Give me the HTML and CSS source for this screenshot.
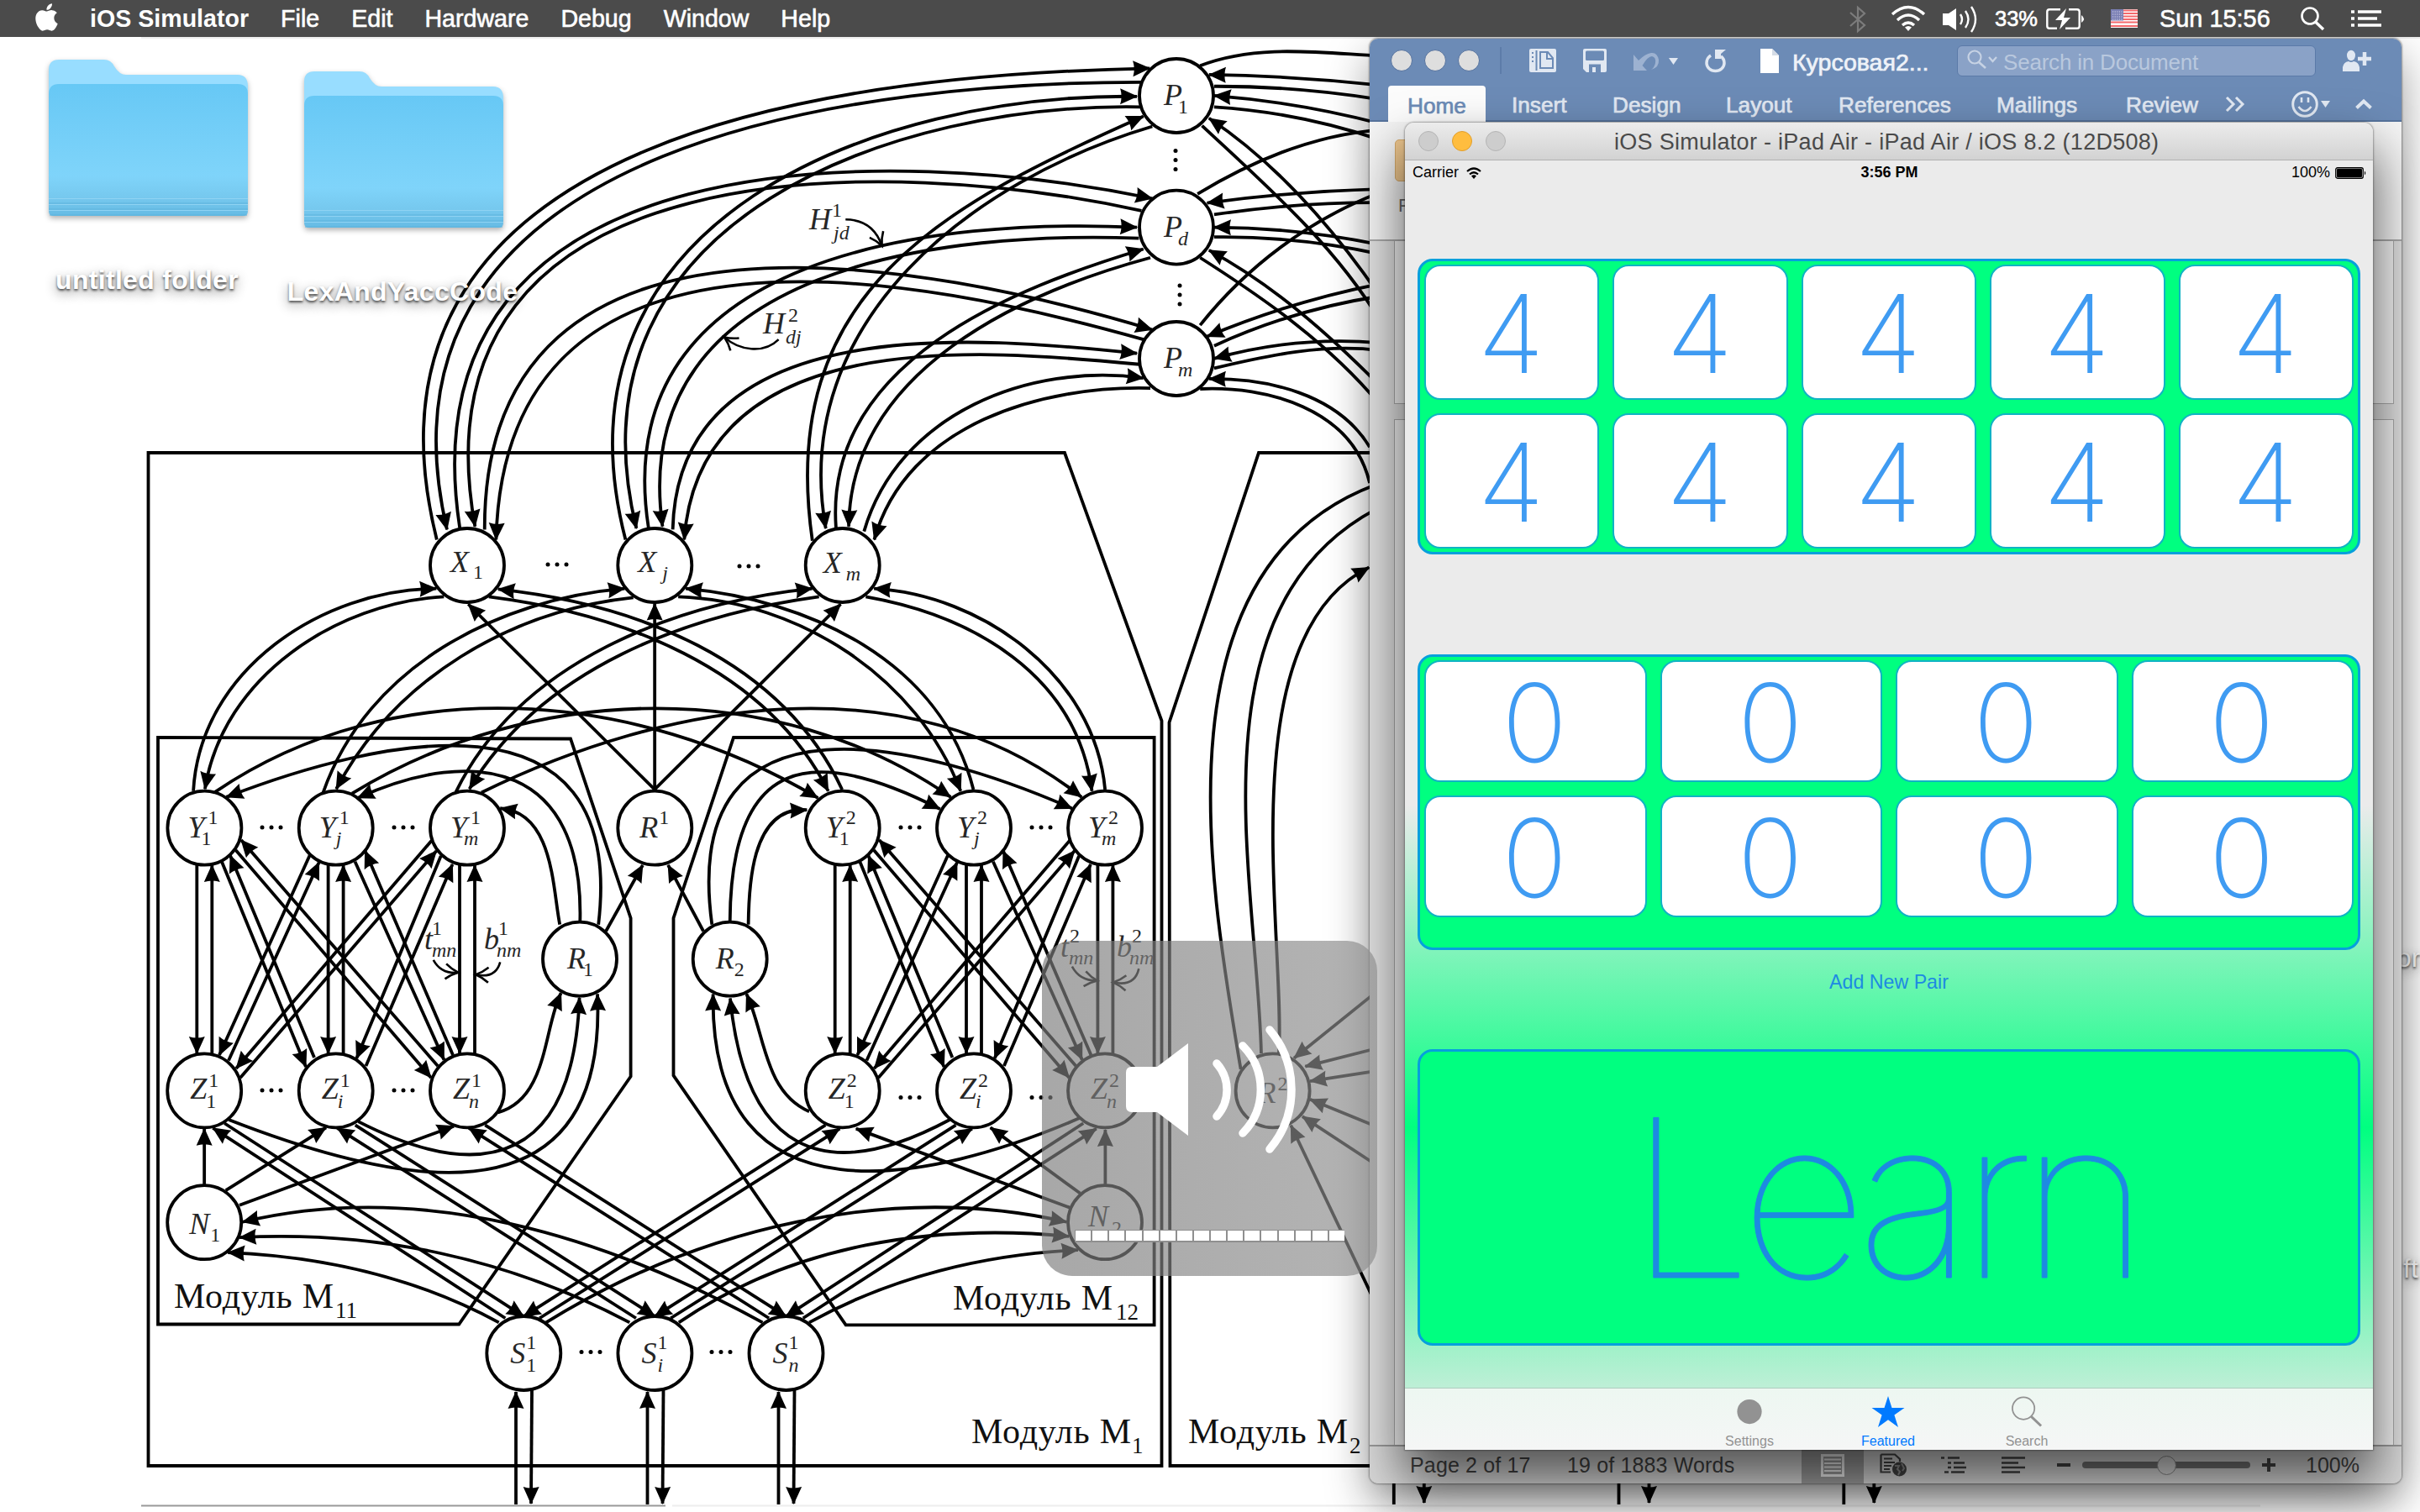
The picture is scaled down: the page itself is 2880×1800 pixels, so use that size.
FILE: index.html
```html
<!DOCTYPE html>
<html lang="en">
<head>
<meta charset="utf-8">
<title>Desktop</title>
<link rel="stylesheet" href="styles.css">
</head>
<body>
<div class="desktop">
  <svg class="wallpaper" id="diagram" viewBox="0 0 2880 1800" aria-label="Network diagram"></svg>

  <div class="folder folder-a">
    <svg class="folder-art" viewBox="0 0 237 186">
      <defs>
        <linearGradient id="fb" x1="0" y1="0" x2="0" y2="1"><stop offset="0" stop-color="#67c8f5"/><stop offset=".7" stop-color="#7fd4fa"/><stop offset=".86" stop-color="#76c8ee"/><stop offset="1" stop-color="#66bbe4"/></linearGradient>
      </defs>
      <path d="M0 12Q0 0 12 0H66Q74 0 78 8Q84 18 92 18H225Q237 18 237 32V60H0Z" fill="#98ddff"/>
      <path d="M0 41Q0 29 12 29H225Q237 29 237 41V180Q237 186 231 186H6Q0 186 0 180Z" fill="url(#fb)"/>
      <path d="M0 165.500H237M0 172.500H237M0 179.500H237" stroke="#8fd3f3" stroke-width="1.200"/>
      <path d="M0 171H237M0 178H237M1 185H236" stroke="#5fb3dd" stroke-width="1.200"/>
    </svg>
    <span class="folder-name">untitled folder</span>
  </div>
  <div class="folder folder-b">
    <svg class="folder-art" viewBox="0 0 237 186">
      <path d="M0 12Q0 0 12 0H66Q74 0 78 8Q84 18 92 18H225Q237 18 237 32V60H0Z" fill="#98ddff"/>
      <path d="M0 41Q0 29 12 29H225Q237 29 237 41V180Q237 186 231 186H6Q0 186 0 180Z" fill="url(#fb)"/>
      <path d="M0 165.500H237M0 172.500H237M0 179.500H237" stroke="#8fd3f3" stroke-width="1.200"/>
      <path d="M0 171H237M0 178H237M1 185H236" stroke="#5fb3dd" stroke-width="1.200"/>
    </svg>
    <span class="folder-name">LexAndYaccCode</span>
  </div>
  <span class="icon-name name-a">or</span>
  <span class="icon-name name-b">ft</span>

  <section class="word">
    <header class="word-head">
      <div class="word-bar">
        <i class="dot"></i><i class="dot"></i><i class="dot"></i>
        <i class="sep"></i>
        <svg class="i-side" viewBox="0 0 32 28"><rect width="32" height="28" rx="2" fill="#e1e8f2"/><path d="M8.500 2V26" stroke="#6c8bb6" stroke-width="2"/><path d="M4 4V6M4 9V11M4 14V16" stroke="#6c8bb6" stroke-width="2"/><path d="M13 4H22L28 11V23H13Z" fill="none" stroke="#6c8bb6" stroke-width="2"/><path d="M21 4V12H28" fill="none" stroke="#6c8bb6" stroke-width="2"/></svg>
        <svg class="i-save" viewBox="0 0 28 28"><path d="M2 0H26Q28 0 28 2V26Q28 28 26 28H4L0 24V2Q0 0 2 0Z" fill="#e1e8f2"/><rect x="3" y="2.500" width="22" height="11.500" rx="1.500" fill="#6c8bb6"/><path d="M7 28V18.500H21V28H15V22H11V28Z" fill="#6c8bb6"/></svg>
        <svg class="i-undo" viewBox="0 0 50 24"><path d="M0 5V24H16L10.500 18Q17 7 22 7Q27 8 26 15Q25 20 21 23Q31 20 30 11Q28 2 21 3Q14 4 6 12Z" fill="#9db2d1"/><path d="M42 9H53L47.500 17Z" fill="#e1e8f2"/></svg>
        <svg class="i-redo" viewBox="0 0 25 28"><path d="M7 8Q2 11 2 17A10.500 9.500 0 0 0 23 17Q23 12 19 9" fill="none" stroke="#e1e8f2" stroke-width="3.500"/><path d="M12 1H25L19 6V12H12Z" fill="#e1e8f2"/></svg>
        <svg class="i-doc" viewBox="0 0 22 29"><path d="M0 0H14L22 8V29H0Z" fill="#fff"/><path d="M14 0V8H22Z" fill="#d5dce6"/></svg>
        <span class="doc-name">Курсовая2...</span>
        <div class="search">
          <svg viewBox="0 0 38 26"><circle cx="9" cy="9" r="7.500" fill="none" stroke="#c6d2e4" stroke-width="2.200"/><path d="M14 15L22 22" stroke="#c6d2e4" stroke-width="2.600"/><path d="M26 9L30.500 14L35 9" fill="none" stroke="#c6d2e4" stroke-width="2.200"/></svg>
          <span>Search in Document</span>
        </div>
        <svg class="i-user" viewBox="0 0 34 25"><ellipse cx="10" cy="6" rx="5" ry="6.200" fill="#e1e8f2"/><path d="M0 25V20Q1 14 7 13Q10 15 13 13Q19 14 20 20V25Z" fill="#e1e8f2"/><path d="M26 2V18M18 10H34" stroke="#e1e8f2" stroke-width="4.500"/></svg>
      </div>
      <nav class="word-tabs">
        <b class="tab-home">Home</b><span class="t1">Insert</span><span class="t2">Design</span><span class="t3">Layout</span><span class="t4">References</span><span class="t5">Mailings</span><span class="t6">Review</span>
        <svg class="t7" viewBox="0 0 24 18"><path d="M2 1L10 9L2 17M13 1L21 9L13 17" fill="none" stroke="#e1e8f2" stroke-width="3"/></svg>
        <svg class="t8" viewBox="0 0 46 32"><circle cx="16" cy="16" r="14.300" fill="none" stroke="#e1e8f2" stroke-width="3"/><path d="M12 8V14M20 8V14M8.500 19Q16 29 23.500 19" fill="none" stroke="#e1e8f2" stroke-width="2.600"/><path d="M35 12H46L40.500 20Z" fill="#e1e8f2"/></svg>
        <svg class="t9" viewBox="0 0 20 12"><path d="M1.500 10.500L10 2.500L18.500 10.500" fill="none" stroke="#e1e8f2" stroke-width="4"/></svg>
      </nav>
    </header>
    <div class="ribbon"><i class="paste"></i><span>P</span></div>
    <div class="pages"><div class="page page-1"></div><div class="page page-2"></div></div>
    <footer class="word-foot">
      <span class="pg">Page 2 of 17</span><span class="wc">19 of 1883 Words</span>
      <span class="view-on"><svg viewBox="0 0 28 27"><rect x="1.500" y="1.500" width="25" height="24" fill="none" stroke="#f4f4f4" stroke-width="3"/><path d="M4 6.500H24M4 11H24M4 15.500H24M4 20H24" stroke="#f4f4f4" stroke-width="2"/></svg></span>
      <svg class="v2" viewBox="0 0 32 28"><path d="M1.500 1.500H18L24 7V10M1.500 1.500V22.500H13M5 6.500H15M5 11H18M5 15H14M5 19H12" fill="none" stroke="#444" stroke-width="2.200"/><circle cx="23.500" cy="19" r="8.500" fill="#444"/><path d="M18 15L23 15L21 19L24 22L22 26M26 12L29 18L27 21" fill="none" stroke="#8d8d8d" stroke-width="2"/></svg>
      <svg class="v3" viewBox="0 0 30 20"><path d="M0 1.500H4M8 1.500H22M8 7.500H12M15 7.500H28M8 13H12M15 13H30M4 18.500H9M12 18.500H28" stroke="#444" stroke-width="2.400"/></svg>
      <svg class="v4" viewBox="0 0 28 20"><path d="M0 1.500H28M0 7.500H20M0 13H28M0 18.500H22" stroke="#444" stroke-width="2.400"/></svg>
      <i class="minus"></i><div class="slider"><i></i></div><i class="plus"></i><span class="zoom">100%</span>
    </footer>
  </section>

  <section class="sim">
    <header class="sim-title"><i></i><i class="amber"></i><i></i><h1>iOS Simulator - iPad Air - iPad Air / iOS 8.2 (12D508)</h1></header>
    <div class="screen">
      <div class="status">
        <span class="carrier">Carrier <svg viewBox="0 0 18 14"><path d="M1 5Q9 -2 17 5M4 8.500Q9 4 14 8.500" fill="none" stroke="#000" stroke-width="2.200"/><path d="M6 10.500Q9 8 12 10.500L9 14Z"/></svg></span>
        <b>3:56 PM</b>
        <span class="power">100% <svg viewBox="0 0 37 14"><rect x=".75" y=".75" width="32.500" height="12.500" rx="2" fill="none" stroke="#000" stroke-width="1.300"/><rect x="2" y="2" width="30" height="10" rx="1"/><path d="M35 4.500Q37.500 7 35 9.500Z"/></svg></span>
      </div>
      <div class="panel fives"><div>4</div><div>4</div><div>4</div><div>4</div><div>4</div><div>4</div><div>4</div><div>4</div><div>4</div><div>4</div></div>
      <div class="panel fours"><div>0</div><div>0</div><div>0</div><div>0</div><div>0</div><div>0</div><div>0</div><div>0</div></div>
      <div class="add">Add New Pair</div>
      <div class="learn">Learn</div>
      <nav class="tabs">
        <span><svg viewBox="0 0 40 40"><circle cx="20" cy="20" r="15" fill="#929292"/></svg>Settings</span>
        <span class="on"><svg viewBox="0 0 40 40"><path d="M20 1L24.600 15.300H40L27.600 24.200L32.300 39L20 30L7.700 39L12.400 24.200L0 15.300H15.400Z" fill="#007aff"/></svg>Featured</span>
        <span><svg viewBox="0 0 40 40"><circle cx="16" cy="16" r="13.500" fill="none" stroke="#929292" stroke-width="1.800"/><path d="M25.500 26L37.500 37.500" stroke="#929292" stroke-width="3"/></svg>Search</span>
      </nav>
    </div>
  </section>

  <div class="hud">
    <svg viewBox="0 0 400 330"><path d="M107 150H137L174 122V232L137 204H107Q100 204 100 197V157Q100 150 107 150Z" fill="#fff"/><path d="M208 146A47 47 0 0 1 208 209M239 125A74 74 0 0 1 239 229M271 106A110 110 0 0 1 271 248" fill="none" stroke="#fff" stroke-width="9.500" stroke-linecap="round"/></svg>
    <div class="level"><i></i><i></i><i></i><i></i><i></i><i></i><i></i><i></i><i></i><i></i><i></i><i></i><i></i><i></i><i></i><i></i></div>
  </div>

  <header class="menubar">
    <svg class="apple" viewBox="2 0 20 24"><path fill="#fff" d="M12.152 6.896c-.948 0-2.415-1.078-3.960-1.040-2.040.027-3.910 1.183-4.961 3.014-2.117 3.675-.546 9.103 1.519 12.090 1.013 1.454 2.208 3.090 3.792 3.039 1.520-.065 2.090-.987 3.935-.987 1.831 0 2.350.987 3.960.948 1.637-.026 2.676-1.480 3.676-2.948 1.156-1.688 1.636-3.325 1.662-3.415-.039-.013-3.182-1.221-3.220-4.857-.026-3.040 2.480-4.494 2.597-4.559-1.429-2.090-3.623-2.324-4.390-2.376-2-.156-3.675 1.090-4.610 1.090zM15.530 3.830c.843-1.012 1.400-2.427 1.245-3.830-1.207.052-2.662.805-3.532 1.818-.780.896-1.454 2.338-1.273 3.714 1.338.104 2.715-.688 3.559-1.701"/></svg>
    <nav><b>iOS Simulator</b><span>File</span><span>Edit</span><span>Hardware</span><span>Debug</span><span>Window</span><span>Help</span></nav>
    <div class="extras">
      <svg class="m-bt" viewBox="0 0 20 32"><path d="M1 8L18 23L10 30V2L18 9L1 24" fill="none" stroke="#7c7c7c" stroke-width="2.200"/></svg>
      <svg class="m-wifi" viewBox="0 0 42 30"><path d="M2 10Q21 -7 40 10M8 17Q21 5 34 17M14 23Q21 17 28 23" fill="none" stroke="#fff" stroke-width="3.400"/><path d="M17 25.500Q21 22.500 25 25.500L21 30Z" fill="#fff"/></svg>
      <svg class="m-vol" viewBox="0 0 42 32"><path d="M0 10H7L16 4V30L7 24H0Z" fill="#fff"/><path d="M21 11Q25 17 21 23M27 7Q34 17 27 27M34 2Q44 17 34 32" fill="none" stroke="#fff" stroke-width="2.400"/></svg>
      <span class="m-pct">33%</span>
      <svg class="m-bat" viewBox="0 0 46 25"><path d="M17 1.300H4Q1.300 1.300 1.300 4V21Q1.300 23.700 4 23.700H13M27 1.300H37Q39.700 1.300 39.700 4V21Q39.700 23.700 37 23.700H23" fill="none" stroke="#fff" stroke-width="2.400"/><path d="M24 0L11 14H19L16 25L29 11H21ZM42 8Q48 12.500 42 17Z" fill="#fff"/></svg>
      <svg class="m-flag" viewBox="0 0 32 22"><rect width="32" height="22" fill="#fff"/><path d="M0 1.500H32M0 5H32M0 8.500H32M0 12H32M0 15.500H32M0 20H32" stroke="#f4696c" stroke-width="1.900"/><rect width="15" height="13.500" fill="#7a7fb4"/><path d="M2 3H14M2 6H14M2 9H14M2 12H14" stroke="#dcdcee" stroke-width="1" stroke-dasharray="1.200 1.400"/></svg>
      <span class="m-time">Sun 15:56</span>
      <svg class="m-find" viewBox="0 0 28 28"><circle cx="11" cy="11" r="9.500" fill="none" stroke="#fff" stroke-width="2.600"/><path d="M17.500 18L27 27" stroke="#fff" stroke-width="3.400"/></svg>
      <svg class="m-list" viewBox="0 0 36 20"><path d="M0 2H4M8 2H36M0 10H4M8 10H31M0 18H4M8 18H36" stroke="#fff" stroke-width="3.600"/></svg>
    </div>
  </header>
</div>
<script src="diagram.js"></script>
</body>
</html>
```
FILE: styles.css
```css
* { box-sizing: border-box; margin: 0; padding: 0; }
body { width: 2880px; height: 1800px; overflow: hidden; font-family: "Liberation Sans", Arial, sans-serif; }
svg { display: block; overflow: visible; flex: none; }
.desktop { position: relative; width: 2880px; height: 1800px; overflow: hidden; background: #fff; }
.wallpaper { position: absolute; inset: 0; width: 2880px; height: 1800px; }
.wallpaper .edge { fill: none; stroke: #000; stroke-width: 3.8; }
.wallpaper .thin { fill: none; stroke: #000; stroke-width: 2.6; }
.wallpaper .box { fill: none; stroke: #000; stroke-width: 3.8; }
.wallpaper .node { fill: #fff; stroke: #000; stroke-width: 3.8; }
.wallpaper text { font-family: "Liberation Serif", "Times New Roman", serif; fill: #262626; }
.wallpaper .sym { font-size: 36px; font-style: italic; }
.wallpaper .idx { font-size: 24px; font-style: italic; }
.wallpaper .num { font-style: normal; }
.wallpaper .module { font-size: 42px; fill: #111; }

/* menu bar */
.menubar { position: absolute; left: 0; top: 0; width: 2880px; height: 44px; background: #4b4b4b; color: #fff; display: flex; align-items: center; padding: 0 46px 0 42px; font-size: 28.6px; }
.apple { width: 27px; height: 33px; margin-top: -4px; }
.menubar nav { display: flex; gap: 38px; margin-left: 38px; }
.menubar span { -webkit-text-stroke: .6px #fff; }
.extras { display: flex; align-items: center; margin-left: auto; }
.m-bt { width: 20px; height: 32px; margin-top: 2px; }
.m-wifi { width: 42px; height: 30px; margin-left: 29px; }
.m-vol { width: 42px; height: 32px; margin-left: 20px; }
.m-pct { font-size: 25.5px; margin-left: 20px; width: 52px; }
.m-bat { width: 46px; height: 25px; margin-left: 9px; }
.m-flag { width: 32px; height: 22px; margin-left: 31px; }
.m-time { margin-left: 26px; width: 132px; font-size: 28.9px; white-space: nowrap; }
.m-find { width: 28px; height: 28px; margin-left: 36px; }
.m-list { width: 36px; height: 20px; margin-left: 32px; }

/* desktop icons */
.folder { position: absolute; display: flex; flex-direction: column; align-items: center; width: 300px; gap: 57px; }
.folder-a { left: 26px; top: 71px; }
.folder-b { left: 330px; top: 85px; }
.folder-art { width: 237px; height: 186px; filter: drop-shadow(0 3px 3px rgba(0,0,0,.3)); }
.folder-name, .icon-name { color: #fff; font-weight: 700; font-size: 32px; line-height: 38px; white-space: nowrap; text-shadow: 0 2px 3px rgba(0,0,0,.65), 0 5px 14px rgba(0,0,0,.45); }
.folder-name { letter-spacing: .3px; margin-left: -2px; }
.icon-name { position: absolute; font-weight: 400; }
.name-a { left: 2852px; top: 1121px; }
.name-b { left: 2860px; top: 1491px; }

/* word processor window */
.word { position: absolute; left: 1630px; top: 46px; width: 1228px; height: 1720px; border-radius: 10px; overflow: hidden; display: flex; flex-direction: column; background: #e2e2e2; box-shadow: 0 0 2px 1px rgba(0,0,0,.35), 0 22px 52px rgba(0,0,0,.4); }
.word-head { height: 99px; flex: none; background: #6c8bb6; border-bottom: 2px solid #56739c; }
.word-bar { display: flex; align-items: center; height: 52px; padding-left: 25px; }
.dot { width: 26px; height: 26px; border-radius: 50%; background: #dedede; border: 1.500px solid #55729e; margin-right: 14px; flex: none; }
.sep { width: 2px; height: 32px; background: #5d7ca9; margin-left: 10px; }
.i-side { width: 32px; height: 28px; margin-left: 33px; }
.i-save { width: 28px; height: 28px; margin-left: 32px; }
.i-undo { width: 50px; height: 24px; margin-left: 32px; }
.i-redo { width: 25px; height: 28px; margin-left: 35px; }
.i-doc { width: 22px; height: 29px; margin-left: 41px; }
.doc-name { margin-left: 16px; width: 180px; font-size: 28.5px; color: #eef2f8; padding-top: 4px; white-space: nowrap; -webkit-text-stroke: .7px #eef2f8; }
.search { width: 427px; height: 37px; border-radius: 6px; border: 1.500px solid #5b7aa8; background: #8aa2c7; display: flex; align-items: center; padding-left: 11px; margin-left: 16px; font-size: 26px; color: #b9c8de; gap: 5px; }
.search svg { width: 38px; height: 26px; }
.search span { padding-top: 4px; letter-spacing: -.2px; }
.i-user { width: 34px; height: 25px; margin-left: 32px; }
.word-tabs { display: flex; align-items: center; height: 47px; font-size: 26.2px; color: #e1e8f2; padding: 4px 0 0 22px; -webkit-text-stroke: .7px #e1e8f2; }
.word-tabs span { padding-top: 3px; }
.tab-home { width: 116px; height: 43px; background: #fcfcfc; color: #6c8bb6; border-radius: 4px 4px 0 0; font-weight: 400; text-align: center; line-height: 48px; -webkit-text-stroke: .7px #6c8bb6; }
.t1 { margin-left: 31px; width: 120px; }
.t2 { width: 135px; }
.t3 { width: 134px; }
.t4 { width: 188px; }
.t5 { width: 154px; }
.t6 { width: 118px; }
.t7 { width: 24px; height: 18px; }
.t8 { width: 46px; height: 32px; margin-left: 55px; }
.t9 { width: 20px; height: 12px; margin-left: 30px; }
.ribbon { height: 142px; flex: none; background: #f4f4f4; border-bottom: 2px solid #a9a9a9; padding: 21px 0 0 30px; display: flex; flex-direction: column; color: #666; font-size: 22px; }
.paste { width: 40px; height: 50px; border-radius: 5px; background: #f2ca90; border: 1.500px solid #d8ac6c; }
.ribbon span { margin: 16px 0 0 4px; }
.pages { flex: 1; display: flex; flex-direction: column; gap: 18px; padding: 0 9px 0 29px; background: #dfdfdf; }
.page { background: #f3f3f3; border: 1.500px solid #aaa; border-top: 0; }
.page-1 { height: 194px; }
.page-2 { flex: 1; border-top: 1.500px solid #aaa; border-bottom: 0; }
.word-foot { height: 46px; flex: none; background: #d8d8d8; border-top: 2px solid #999; display: flex; align-items: center; padding-left: 48px; font-size: 25px; color: #444; white-space: nowrap; }
.pg { width: 187px; letter-spacing: .15px; }
.wc { width: 279px; letter-spacing: .15px; }
.view-on { width: 74px; height: 46px; background: #9e9e9e; display: flex; align-items: center; justify-content: center; }
.view-on svg { width: 28px; height: 27px; }
.v2 { width: 32px; height: 28px; margin-left: 19px; }
.v3 { width: 30px; height: 20px; margin-left: 41px; }
.v4 { width: 28px; height: 20px; margin-left: 42px; }
.minus { width: 16px; height: 4px; background: #444; margin-left: 38px; }
.slider { width: 200px; height: 8px; border-radius: 4px; background: #747474; margin-left: 14px; display: flex; align-items: center; justify-content: center; }
.slider i { width: 23px; height: 23px; flex: none; border-radius: 50%; background: #dcdcdc; border: 1.500px solid #888; }
.plus { width: 16px; height: 16px; margin-left: 14px; background: linear-gradient(#444,#444) center/16px 4px no-repeat, linear-gradient(#444,#444) center/4px 16px no-repeat; }
.zoom { margin-left: 36px; }

/* simulator window */
.sim { position: absolute; left: 1672px; top: 146px; width: 1152px; height: 1580px; border-radius: 11px 11px 0 0; box-shadow: 0 0 2px 1px rgba(0,0,0,.3), 0 34px 60px 4px rgba(0,0,0,.6); display: flex; flex-direction: column; overflow: hidden; background: #ebebeb; }
.sim-title { height: 45px; flex: none; display: flex; align-items: center; gap: 16px; padding-left: 16px; background: linear-gradient(#ececec, #d2d2d2); border-bottom: 1.500px solid #b1b1b1; }
.sim-title i { width: 24px; height: 24px; border-radius: 50%; background: #cdcdcd; border: 1.500px solid #b4b4b4; flex: none; }
.sim-title .amber { background: #ffbd3f; border-color: #e09e2c; }
.sim-title h1 { font-size: 27px; letter-spacing: .28px; font-weight: 400; color: #4a4a4a; margin-left: 113px; padding-top: 2px; white-space: nowrap; }
.screen { flex: 1; display: flex; flex-direction: column; align-items: center; background: linear-gradient(#ebebeb 50%, #00ff80 75%, #ebebeb 100%); }
.status { width: 100%; height: 26px; margin-bottom: 91px; padding: 3px 8px 0 9px; display: grid; grid-template-columns: 1fr auto 1fr; align-items: center; font-size: 18px; color: #000; }
.status b { font-size: 18px; }
.status svg { height: 14px; }
.carrier { display: flex; align-items: center; gap: 9px; }
.carrier svg { width: 18px; }
.power { display: flex; align-items: center; gap: 6px; justify-content: flex-end; }
.power svg { width: 37px; }
.panel, .learn { width: 1122px; height: 352px; flex: none; border: 3px solid #06a0dc; border-radius: 18px; background: #00ff80; }
.panel { display: grid; gap: 16px; padding: 4px 5px 0; align-content: start; }
.panel div { background: #fff; border: 2.500px solid #10b3c4; border-radius: 19px; color: #3f9bf2; font: 200 129px/1 Inter, Roboto, sans-serif; display: flex; align-items: center; justify-content: center; padding: 4px 2px 0 0; }
.fives { grid-template-columns: repeat(5, 1fr); grid-auto-rows: 161px; }
.fours { grid-template-columns: repeat(4, 1fr); grid-auto-rows: 145px; margin-top: 119px; }
.add { height: 118px; flex: none; padding-top: 25px; font-size: 23.2px; color: #1d8ae2; }
.learn { height: 353px; color: #1d8ae2; font: 100 262px/1 Inter, Roboto, sans-serif; letter-spacing: -14px; display: flex; align-items: center; justify-content: center; padding: 1px 14px 0 0; -webkit-text-stroke: 1px #1d8ae2; }
.tabs { width: 100%; height: 74px; margin-top: auto; background: linear-gradient(#edf7f1, #f5f6f6); border-top: 1.500px solid #afcdbf; display: flex; justify-content: center; gap: 45px; font-size: 16px; color: #929292; }
.tabs span { width: 120px; display: flex; flex-direction: column; align-items: center; line-height: 18px; padding: 8px 2px 0 0; gap: 7px; }
.tabs svg { width: 40px; height: 39px; }
.tabs .on { color: #007aff; }

/* volume overlay */
.hud { position: absolute; left: 1240px; top: 1120px; width: 399px; height: 399px; border-radius: 36px; background: linear-gradient(90deg, rgba(124,124,124,.667), rgba(142,142,142,.667)); display: flex; flex-direction: column; align-items: center; gap: 14px; }
.hud svg { width: 400px; height: 330px; }
.level { display: flex; width: 321px; height: 15px; background: #8f8f8f; padding: 1px 0 2px 1px; gap: 2px; }
.level i { flex: 1; background: #fff; }
```
FILE: diagram.js
```js
// Draws the module network: edges are fitted through a few waypoints,
// nodes and labels sit on top.
const NS = 'http://www.w3.org/2000/svg';
const root = document.getElementById('diagram');

function add(tag, attrs, text) {
  const el = document.createElementNS(NS, tag);
  for (const k in attrs) el.setAttribute(k, attrs[k]);
  if (text) el.textContent = text;
  root.appendChild(el);
  return el;
}

// Local grids of the parts of the diagram: origin and unit size.
const grids = {
  A: [450, 30, .7589, .4464], B: [160, 640, .4464, .3571], C: [700, 640, .4464, .3571],
  D: [160, 1130, .5102, .4273], E: [900, 1130, .4847, .4273], F: [1240, 500, .3333, .7015],
  G: [0, 0, 1, 1], H: [759.4, 0, 1, 1]
};

function bez(c, t) {
  const u = 1 - t, w = [u*u*u, 3*u*u*t, 3*u*t*t, t*t*t];
  return [0, 1].map(k => w.reduce((s, v, i) => s + v * c[i][k], 0));
}

function fit(p) {
  const n = p.length, a = p[0], d = p[n - 1];
  if (n === 2) return [a, a, d, d];
  let t = [0];
  for (let i = 1; i < n; i++) t.push(t[i-1] + Math.hypot(p[i][0]-p[i-1][0], p[i][1]-p[i-1][1]));
  t = t.map(v => v / t[n-1]);
  if (n === 3) {
    const s = t[1], u = 1 - s;
    const q = [0, 1].map(k => (p[1][k] - u*u*a[k] - s*s*d[k]) / (2*u*s));
    return [a, a.map((v, k) => v + (q[k]-v)*2/3), d.map((v, k) => v + (q[k]-v)*2/3), d];
  }
  let c;
  for (let pass = 0; pass < (n === 4 ? 1 : 12); pass++) {
    let m11 = 0, m12 = 0, m22 = 0; const r1 = [0, 0], r2 = [0, 0];
    for (let i = 1; i < n - 1; i++) {
      const s = t[i], u = 1 - s, f = 3*u*u*s, g = 3*u*s*s;
      m11 += f*f; m12 += f*g; m22 += g*g;
      for (let k = 0; k < 2; k++) {
        const e = p[i][k] - u*u*u*a[k] - s*s*s*d[k];
        r1[k] += f*e; r2[k] += g*e;
      }
    }
    const det = m11*m22 - m12*m12;
    c = [a, [0, 1].map(k => (r1[k]*m22 - r2[k]*m12)/det), [0, 1].map(k => (r2[k]*m11 - r1[k]*m12)/det), d];
    t = t.map((s, i) => {
      if (i === 0 || i === n - 1) return s;
      let best = s, dist = 1e9;
      for (let j = 0; j <= 300; j++) {
        const q = bez(c, j/300), h = Math.hypot(q[0]-p[i][0], q[1]-p[i][1]);
        if (h < dist) { dist = h; best = j/300; }
      }
      return best;
    });
  }
  return c;
}

// edge(grid, waypoints, head): head 1 = filled arrow at the end, 2 = open arrow, 0 = none
function edge(g, nums, head = 1) {
  const [ox, oy, sx, sy] = grids[g], p = [];
  for (let i = 0; i < nums.length; i += 2) p.push([ox + nums[i]*sx, oy + nums[i+1]*sy]);
  const c = fit(p), end = c[3];
  let t = 1, q = end;
  while (t > 0 && Math.hypot(q[0]-end[0], q[1]-end[1]) < 14) { t -= .002; q = bez(c, t); }
  add('path', { class: head === 2 ? 'thin' : 'edge', d: `M${c[0]}C${c[1]} ${c[2]} ${c[3]}` });
  if (!head) return;
  const l = Math.hypot(end[0]-q[0], end[1]-q[1]), x = (end[0]-q[0])/l, y = (end[1]-q[1])/l;
  const at = (b, s) => [end[0] - x*b - y*s, end[1] - y*b + x*s];
  if (head === 1) add('path', { d: `M${at(-1, 0)}L${at(20, 9.5)}Q${at(17, 0)} ${at(20, -9.5)}Z` });
  else add('path', { class: 'thin', d: `M${at(15, 9)}Q${at(8, 3)} ${end}Q${at(8, -3)} ${at(15, -9)}` });
}

// module outlines
add('path', { class: 'box', d: 'M1267 539H176.500V1745H1382.500V858Z' });
add('path', { class: 'box', d: 'M1640 539H1498L1391.500 860L1392.500 1745H1640' });
add('path', { class: 'box', d: 'M188 878L679 879.500L750.600 1093V1281.500L546.200 1576.500H188Z' });
add('path', { class: 'box', d: 'M873 878H1373.600V1577.400H1006.600L801.500 1280.400V1093Z' });

// P - X
edge('A', [92,1372,74,1100,104,829,139,688,249,499,405,336,725,195,1210,115]);
edge('A', [1197,152,725,220,432,358,290,488,188,643,123,829,96,1080,108,1345]);
edge('A', [128,1340,124,1150,163,829,273,623,415,489,584,411,760,387,960,408,1214,462]);
edge('A', [1197,495,960,437,760,420,541,444,415,511,298,627,182,829,144,1100,152,1337]);
edge('A', [167,1345,180,1130,285,829,457,683,626,644,830,668,1000,720,1214,812]);
edge('A', [1200,838,970,745,800,697,640,684,424,743,331,829,205,1150,185,1372]);
edge('A', [388,1372,372,1080,397,829,500,590,626,399,725,329,900,252,1190,190]);
edge('A', [1195,218,980,248,725,366,592,475,491,646,420,829,391,1080,405,1342]);
edge('A', [424,1340,422,1150,504,829,725,616,850,567,1000,543,1190,539]);
edge('A', [1193,568,1050,570,880,598,725,653,541,829,462,1040,446,1337]);
edge('A', [462,1345,490,1130,600,950,730,878,920,845,1060,853,1190,875]);
edge('A', [1197,905,1050,885,920,878,740,912,540,1100,500,1210,480,1372]);
edge('A', [681,1375,677,1140,705,900,770,700,860,560,1000,410,1200,243]);
edge('A', [1214,270,1020,412,880,570,795,710,735,900,698,1120,702,1342]);
edge('A', [718,1340,735,1130,790,970,880,840,1000,720,1200,597]);
edge('A', [1211,620,1020,735,900,860,810,1000,760,1140,738,1337]);
edge('A', [762,1350,800,1210,860,1095,960,990,1050,948,1200,941]);
edge('A', [1211,968,1080,985,950,1050,860,1150,810,1250,778,1372]);
// P - right side
edge('A', [1289,108,1350,80,1440,70,1570,82], 0);
edge('A', [1570,160,1430,140,1303,132]);
edge('A', [1311,163,1430,170,1570,198], 0);
edge('A', [1570,262,1430,212,1311,188]);
edge('A', [1311,218,1430,243,1570,305], 0);
edge('A', [1570,720,1480,520,1380,348,1303,248]);
edge('A', [1292,268,1400,440,1490,600,1570,785], 0);
edge('A', [1285,450,1380,365,1480,305,1570,279], 0);
edge('A', [1570,437,1430,450,1300,474]);
edge('A', [1311,505,1430,482,1570,473], 0);
edge('A', [1570,585,1430,549,1311,539]);
edge('A', [1311,565,1430,573,1570,610], 0);
edge('A', [1570,960,1490,830,1400,705,1303,600]);
edge('A', [1289,620,1390,735,1490,870,1570,1010], 0);
edge('A', [1289,800,1380,640,1470,530,1570,447], 0);
edge('A', [1570,690,1430,750,1300,830]);
edge('A', [1311,855,1420,783,1570,723], 0);
edge('A', [1570,847,1440,848,1311,889]);
edge('A', [1311,915,1400,882,1490,863,1570,867], 0);
edge('A', [1555,1125,1510,1040,1420,967,1303,943]);
edge('A', [1289,970,1400,988,1500,1070,1555,1221], 0);
// R2 fan
edge('F', [1190,110,960,165,780,270,650,430,603,640,620,820,710,1102], 0);
edge('F', [1190,152,980,220,820,360,740,550,730,760,783,1075], 0);
edge('F', [846,1075,828,860,835,620,890,440,980,320,1168,250]);
for (const l of [[1190,972,900,1083],[1190,1067,940,1097],[1190,1105,957,1122],[1190,1198,957,1153],[1190,1263,930,1182],[1190,1498,889,1197]]) edge('F', l);
// Y1 - X
edge('B', [157,845,215,590,310,425,500,260,805,170]);
edge('B', [825,197,560,280,380,420,250,620,188,838]);
edge('B', [503,850,590,645,720,455,900,310,1110,215,1307,170]);
edge('B', [1330,200,1100,265,900,370,740,520,640,650,538,838]);
edge('B', [857,848,950,655,1110,482,1210,400,1390,292,1568,218,1807,170]);
edge('B', [1825,197,1640,240,1390,337,1210,450,1040,610,893,838]);
// Y1 - Y2 arcs
edge('B', [215,848,500,670,750,590,965,567,1185,585,1387,638,1510,690,1822,868]);
edge('B', [580,853,860,690,1180,585,1387,567,1590,587,1950,710,2176,865]);
edge('B', [925,850,1175,718,1387,638,1590,587,1800,567,2090,605,2260,680,2525,865]);
// R_1, R_2 to Y
edge('B', [1237,1290,1237,1080,1195,900,1090,760,960,703,850,693,560,743,245,865]);
edge('B', [1188,1277,1170,1060,1090,875,1000,800,880,778,750,803,595,868]);
edge('B', [1134,1290,1110,1100,1065,965,1020,915,975,902]);
edge('C', [427,1290,440,1090,475,980,520,920,583,908]);
edge('C', [378,1277,395,1050,460,870,540,795,630,780,760,815,938,905]);
edge('C', [330,1290,330,1050,370,880,465,770,570,715,690,703,960,760,1290,903]);
edge('B', [1257,1312,1355,1092]);
edge('C', [307,1312,213,1092]);
edge('B', [1387,840,890,222]);
edge('B', [1387,840,1387,220]);
edge('C', [177,840,673,222]);
// Y2 - X
edge('C', [1378,840,1320,600,1210,417,1030,260,762,170]);
edge('C', [740,197,940,270,1100,365,1210,482,1290,640,1343,845]);
edge('C', [1027,840,955,640,850,460,620,285,430,205,260,170]);
edge('C', [240,197,430,235,620,325,780,470,900,630,993,845]);
edge('C', [677,840,580,650,460,490,300,370,177,292,0,225,-240,172]);
edge('C', [-265,197,-50,245,177,340,300,420,440,535,560,685,640,845]);
// Y - Z lattices
for (const g of ['G', 'H']) {
  for (const x of [243.3, 399.6, 556]) {
    edge(g, [x-9,1028,x-9,1254]);
    edge(g, [x+9,1256,x+9,1030]);
  }
  for (const l of [[264,1026,364,1270],[374,1259,274,1018.5],[280.5,1012,513,1283],[521,1269,287,1000],
    [368.5,1018.5,261,1256],[272,1262.5,379.6,1026.7],[422.5,1025.7,528.4,1261.6],[539,1256,434.5,1013],
    [513.6,1000.7,281,1272],[286,1283,519.4,1013],[524.7,1019,424.3,1260],[435.5,1269,538.5,1029]]) edge(g, l);
}
// Z - R_1, R_2
edge('D', [848,455,900,420,950,310,995,122]);
edge('D', [522,480,650,545,780,570,900,540,990,410,1038,135]);
edge('D', [220,475,400,550,560,600,730,622,900,590,1010,485,1065,330,1080,125]);
edge('E', [130,452,70,400,20,280,-24,125]);
edge('E', [475,475,350,535,210,568,90,530,0,410,-64,137]);
edge('E', [795,470,600,550,450,595,280,622,100,588,0,505,-63,400,-106,125]);
// Z - S
for (const l of [[210,485,908,1023],[865,1028,183,498],[515,490,1214,1023],[1170,1028,473,498],[818,490,1520,1023],[1480,1028,780,498]]) edge('D', l);
for (const l of [[170,490,-571,1023],[-532,1028,205,500],[490,490,-249,1023],[-210,1028,530,500],[803,485,73,1023],[115,1028,835,500]]) edge('E', l);
// S - N
edge('D', [850,1040,670,945,470,880,218,845]);
edge('D', [1155,1040,900,910,650,830,400,803,245,803]);
edge('D', [1465,1040,1160,870,880,765,600,720,420,728,252,760]);
edge('E', [130,1040,350,930,560,868,790,838]);
edge('E', [-190,1040,0,920,230,835,500,792,768,800]);
edge('E', [-516,1040,-253,885,0,787,200,740,420,720,600,728,762,760]);
// N - Z
for (const l of [[163,655,163,500],[213,672,447,497],[245,713,745,493]]) edge('D', l);
for (const l of [[857,655,857,503],[795,680,575,497],[770,720,245,500]]) edge('E', l);
// S terminals
for (const x of [614, 770.5, 926.5]) { edge('G', [x,1791,x,1657]); edge('G', [x+19,1655,x+18,1790]); }
for (const x of [1658.8, 1926.5, 2194.3]) { edge('G', [x,1740,x,1791], 0); edge('G', [x+36,1740,x+36,1789]); }
add('path', { d: 'M168 1792.500H792', stroke: '#999', 'stroke-width': 2 });
add('path', { d: 'M800 1792.500H2690', stroke: '#eee', 'stroke-width': 2 });
add('path', { d: 'M168 45H2880', stroke: '#eee', 'stroke-width': 2 });
// pointers from labels
edge('A', [733,518,768,535,790,588], 2);
edge('A', [628,838,600,862,570,858,543,832], 2);
edge('B', [797,1408,818,1438,863,1450], 2);
edge('B', [975,1415,962,1445,910,1457], 2);
edge('C', [1290,1430,1312,1462,1357,1477], 2);
edge('C', [1468,1437,1455,1470,1400,1483], 2);

// nodes: x, y, symbol, dx, dy, [index, dx, dy] ...
const nodes = [];
const P = (y, i) => nodes.push([1400, y, 'P', -15, 11, [i, 2, 21]]);
P(114, '1'); P(270.6, 'd'); P(427, 'm');
nodes.push([556,673,'X',-20,8,['1',7,16]], [779.3,673,'X',-20,8,['j',9,17]], [1002.7,673,'X',-23,9,['m',4,18]]);
[[243.4,'1','1',-2],[399.7,'j','1',2],[556,'m','1',-2],[1002.7,'1','2',-2],[1159,'j','2',2],[1315,'m','2',-2]].forEach(([x,i,s,o]) =>
  nodes.push([x, 985.7, 'Y', -20, 11, [i, o-2, 20], [s, 4, -5]]));
[[243.2,'1','1'],[399.7,'i','1'],[556,'n','1'],[1002.7,'1','2'],[1159,'i','2'],[1315,'n','2']].forEach(([x,i,s]) =>
  nodes.push([x, 1298.4, 'Z', -17, 10, [i, 2, 21], [s, 5, -4]]));
[[623.3,'1'],[779.4,'i'],[935.5,'n']].forEach(([x,i]) => nodes.push([x, 1611, 'S', -16, 12, [i, 3, 22], ['1', 3, -5]]));
nodes.push([779.3,985.7,'R',-18,11,['1',5,-5]], [690,1141.7,'R',-15,11,['1',4,20]], [868.7,1141.7,'R',-17,11,['2',5,20]],
  [243.2,1455.2,'N',-18,14,['1',7,23]], [1315,1455.2,'N',-20,5,['2',8,15]], [1514.6,1298.4,'R',-18,15,['2',6,0]]);

function index(x, y, s) {
  add('text', { class: /\d/.test(s) ? 'idx num' : 'idx', x, y }, s);
}
for (const [x, y, s, dx, dy, ...idx] of nodes) {
  add('circle', { class: 'node', cx: x, cy: y, r: 44 });
  add('text', { class: 'sym', x: x + dx, y: y + dy }, s);
  idx.forEach(([t, ix, iy]) => index(x + ix, y + iy, t));
}
for (const [s, x, y, sub, sx, sy, sup, ux, uy] of [
  ['H',963,273,'jd',992,285,'1',990,258], ['H',908,397,'dj',935,409,'2',938,383],
  ['t',505,1130,'mn',514,1139,'1',514,1113], ['b',576,1130,'nm',591,1139,'1',593,1113],
  ['t',1262,1139,'mn',1272,1148,'2',1273,1122], ['b',1329,1139,'nm',1344,1148,'2',1347,1122]]) {
  add('text', { class: 'sym', x, y }, s);
  index(sx, sy, sub); index(ux, uy, sup);
}
for (const [x, y, sx, sub] of [[207,1557,399,'11'],[1134,1558.5,1328,'12'],[1156,1717.5,1347,'1'],[1414,1717.5,1606,'2']]) {
  add('text', { class: 'module', x, y, textLength: 190 }, 'Модуль М');
  add('text', { class: 'module', x: sx, y: y + 12, style: 'font-size:27px' }, sub);
}
for (const [x, y, v] of [[663,672],[891,674],[323,985],[480,985],[1083,985],[1239,985],[323,1298],[480,1298],[1083,1306.5],[1239,1306.5],[703,1609.5],[858,1609.5],[1399,190.5,1],[1404,351,1]])
  for (const k of [-11, 0, 11]) add('circle', { cx: v ? x : x + k, cy: v ? y + k : y, r: 2.5 });
```
